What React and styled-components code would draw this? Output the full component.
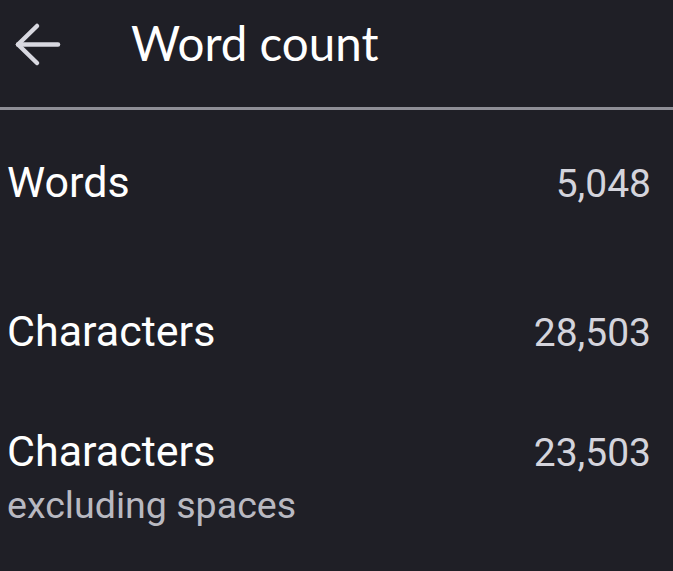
import styled, { createGlobalStyle } from "styled-components";

const GlobalStyle = createGlobalStyle`
  html, body {
    margin: 0;
    padding: 0;
    background: #1f1f26;
  }
  body {
    font-family: Roboto, "Noto Sans", sans-serif;
  }
`;

const Page = styled.div`
  width: 673px;
  height: 571px;
  background: #1f1f26;
  overflow: hidden;
`;

const Header = styled.header`
  height: 83px;
  padding-bottom: 24px;
  display: flex;
  align-items: center;
  border-bottom: 3px solid #8e8e96;
`;

const BackButton = styled.button`
  width: 62px;
  height: 52px;
  padding: 0 0 0 14px;
  display: flex;
  align-items: center;
  background: none;
  border: none;
  color: #d8d8e0;
`;

const Title = styled.h1`
  margin: 2px 0 0 69px;
  font-family: Lato, "Open Sans", sans-serif;
  font-weight: 400;
  font-size: 47.5px;
  line-height: 60px;
  color: #ffffff;
`;

const List = styled.main`
  padding: 44px 22px 0 7px;
`;

const Row = styled.div`
  display: flex;
  justify-content: space-between;
  align-items: baseline;
  margin-top: ${(p) => p.$gap || 0}px;
`;

const Label = styled.div`
  font-size: 43px;
  line-height: 56px;
  color: #ffffff;
`;

const Sub = styled.div`
  font-size: 37.6px;
  line-height: 52px;
  color: #b9b9c1;
`;

const Value = styled.div`
  font-size: 39px;
  line-height: 56px;
  color: #d4d4dc;
`;

const stats = [
  { label: "Words", value: "5,048", gap: 0 },
  { label: "Characters", value: "28,503", gap: 91 },
  { label: "Characters", sub: "excluding spaces", value: "23,503", gap: 62 },
];

export default function App() {
  return (
    <Page>
      <GlobalStyle />
      <Header>
        <BackButton aria-label="Back">
          <svg width="48" height="52" viewBox="0 0 48 52" fill="none" stroke="currentColor" strokeWidth="4.5" strokeLinecap="round" strokeLinejoin="round">
            <path d="M44 28.5H4" />
            <path d="M23 10L4 28.5 23 47" />
          </svg>
        </BackButton>
        <Title>Word count</Title>
      </Header>
      <List>
        {stats.map((s, i) => (
          <Row key={i} $gap={s.gap}>
            <div>
              <Label>{s.label}</Label>
              {s.sub && <Sub>{s.sub}</Sub>}
            </div>
            <Value>{s.value}</Value>
          </Row>
        ))}
      </List>
    </Page>
  );
}
